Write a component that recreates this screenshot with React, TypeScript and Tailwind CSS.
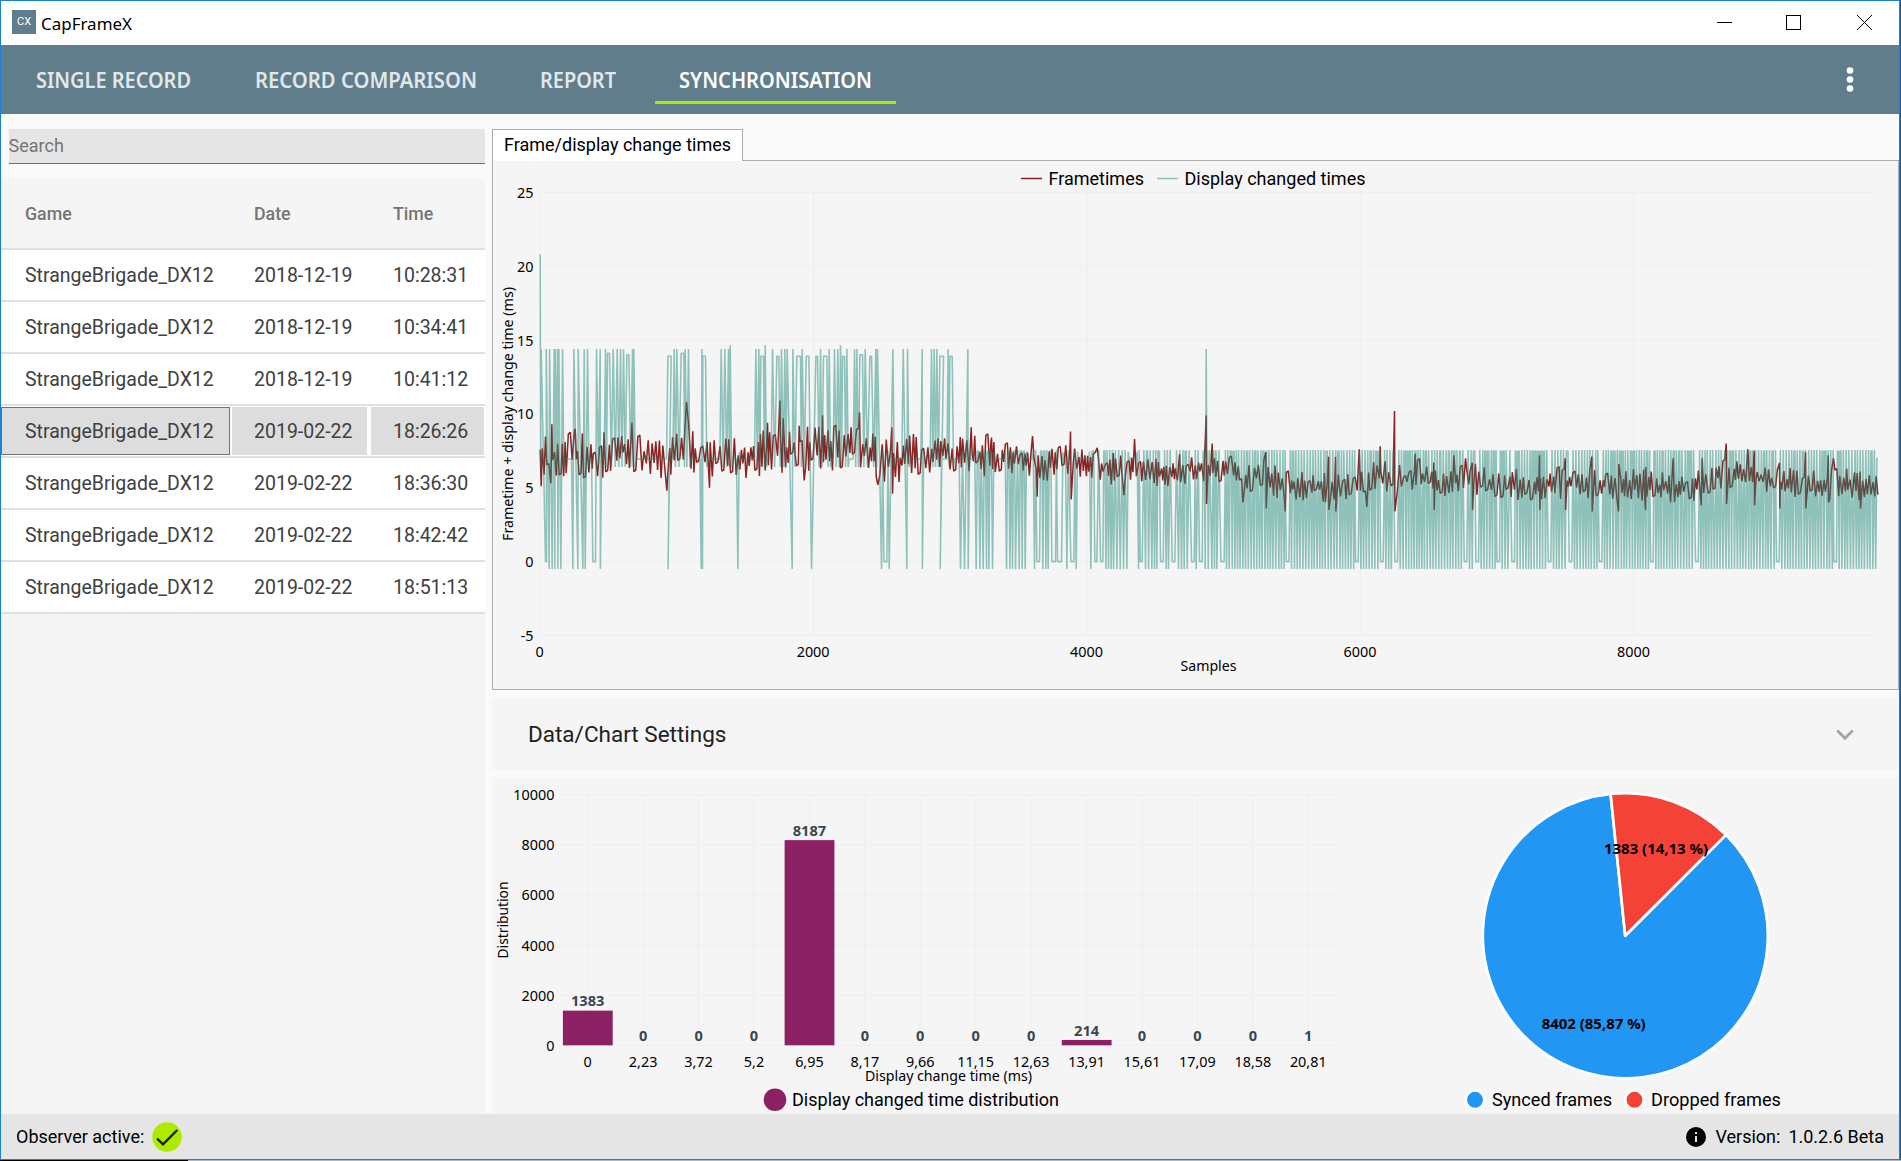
import type { ReactNode } from 'react';
import clsx from 'clsx';

const tabs = [
  { name: 'SINGLE RECORD', length: 155, className: 'ml-[10px] w-[205px]' },
  { name: 'RECORD COMPARISON', length: 222, className: 'ml-[15px] w-[270px]' },
  { name: 'REPORT', length: 76, className: 'ml-[14px] w-[126px]' },
  { name: 'SYNCHRONISATION', length: 193, className: 'ml-[14px] w-[241px]' },
];

const records = [
  { game: 'StrangeBrigade_DX12', date: '2018-12-19', time: '10:28:31' },
  { game: 'StrangeBrigade_DX12', date: '2018-12-19', time: '10:34:41' },
  { game: 'StrangeBrigade_DX12', date: '2018-12-19', time: '10:41:12' },
  { game: 'StrangeBrigade_DX12', date: '2019-02-22', time: '18:26:26' },
  { game: 'StrangeBrigade_DX12', date: '2019-02-22', time: '18:36:30' },
  { game: 'StrangeBrigade_DX12', date: '2019-02-22', time: '18:42:42' },
  { game: 'StrangeBrigade_DX12', date: '2019-02-22', time: '18:51:13' },
];
const selectedRecord = 3;

type Point = [number, number];
// [from, to, value]
type Hold = [number, number, number];

function random(seed: number) {
  let s = seed;
  return () => {
    s = (s * 1664525 + 1013904223) % 4294967296;
    return s / 4294967296;
  };
}

// series are stored on a grid of 4013 columns, three per pixel
const COLUMNS = 4013;
const px = (u: number) => 540.2 + u / 3;
const py = (v: number) => 561.6 - v * 14.77;
const toPath = (points: Point[]) =>
  points.map(([u, v], i) => `${i ? 'L' : 'M'}${px(u).toFixed(2)} ${py(v).toFixed(2)}`).join('');

const peaks = [
  3, 18, 28, 42, 45, 52, 56, 67, 101, 114, 132, 142, 169, 180, 196, 219, 231, 241, 250, 277, 281, 402, 410, 435,
  445, 485, 543, 554, 565, 570, 647, 656, 675, 697, 724, 734, 741, 758, 786, 841, 867, 883, 893, 901, 920, 943,
  950, 975, 1007, 1012, 1058, 1089, 1102, 1146, 1174, 1182, 1190, 1224, 1283, 1998,
];
const peakHolds: Hold[] = [
  [202, 208, 14.1], [260, 266, 14], [383, 393, 13.9], [423, 431, 14.1], [488, 496, 13.9], [662, 670, 13.9],
  [710, 716, 13.9], [770, 781, 13.9], [798, 806, 13.9], [827, 832, 13.9], [850, 860, 13.9], [907, 913, 13.9],
  [959, 967, 14], [989, 994, 13.9], [1199, 1210, 13.9], [1229, 1236, 13.9],
];
const drops = [
  27, 36, 44, 53, 62, 98, 113, 128, 135, 180.5, 383.5, 483, 487, 593, 756, 814, 1024, 1047, 1100, 1146.5, 1200,
  1261, 1273, 1284, 1308, 1319, 1329, 1339, 1346, 1357, 1399, 1409, 1417, 1426, 1437, 1446, 1455, 1483, 1508,
  1517, 1524, 1580, 1608, 1652, 1697, 1705, 1713, 1720, 1730, 1740, 1750, 1760, 1795, 1816, 1825, 1835, 1843,
  1850, 1878, 1885, 1915, 1924, 1932, 1941, 1968, 1995, 2004, 2015, 2023, 2030,
];
const dropHolds: Hold[] = [
  [16, 19, 0], [158, 166, 0], [1031, 1040, 0], [1490, 1498, 0], [1535, 1546, 0], [1552, 1564, 0],
  [1592, 1601, 0], [1664, 1670, 0], [1681, 1688, 0], [1800, 1806, 0], [1861, 1869, 0], [1896, 1904, 0],
  [1954, 1962, 0], [1978, 1986, 0], [2042, 2052, 0],
];
const lateHolds = [2242, 2450, 2525, 2568, 2776, 2811, 2874, 2919, 3028, 3091, 3181, 3335, 3470, 3713, 3885];

function displayChangedTimes(): Point[] {
  const rnd = random(11);
  const events: Hold[] = [
    ...peaks.map((u): Hold => [u, u, 14.4 + (rnd() > 0.88 ? 0.25 : 0)]),
    ...drops.map((u): Hold => [u, u, -0.5]),
    ...peakHolds,
    ...dropHolds,
  ];
  // from here on every other sample drops
  let u = 2059;
  while (u < COLUMNS - 3) {
    const hold = lateHolds.find((h) => Math.abs(h - u) < 8);
    if (hold) {
      events.push([hold - 4, hold + 4, 0]);
      u = hold + 12;
    } else {
      events.push([u, u, -0.5]);
      u += 7.6 + rnd() * 1.6;
    }
  }
  events.sort((a, b) => a[0] - b[0]);

  const points: Point[] = [[0, 20.8]];
  let last = 0;
  let lastValue = 14;
  events.forEach(([from, to, value]) => {
    const gap = from - last;
    const late = last > 1300;
    if (gap > 15) {
      const top = late && rnd() > 0.4;
      points.push([last + 4, top ? 7.45 : lastValue > 7 ? 6.4 : 7.4], [last + 7, 6.95]);
      points.push([from - 7, 6.95], [from - 4, top ? 7.45 : 6.95]);
    } else if (late) {
      const shift = 0.4 + rnd() * 0.2;
      if (rnd() > 0.75) points.push([last + gap * 0.3, 7.48], [last + gap * 0.7, 7.48]);
      else points.push([last + gap * shift, 7.55]);
    } else if (gap > 1 && value > 0 === lastValue > 0) {
      points.push([last + gap / 2, value > 0 ? 6.4 : 7.5]);
    }
    points.push([from, value]);
    if (to > from) points.push([to, value]);
    last = to;
    lastValue = value;
  });
  points.push([COLUMNS - 3, 7], [COLUMNS, 7]);
  return points;
}

const trend: Point[] = [
  [0, 7], [100, 7.3], [160, 6.9], [250, 7.6], [340, 6.9], [390, 7.2], [440, 8], [480, 7], [600, 6.8], [680, 7.4],
  [800, 7.6], [960, 7.6], [1020, 6.9], [1060, 6.6], [1120, 7.1], [1220, 7.4], [1300, 7], [1400, 7], [1510, 6.4],
  [1580, 6.8], [1650, 6.7], [1710, 6.2], [1780, 6.5], [1860, 6], [1990, 6.4], [2070, 6.2], [2120, 5.6], [2160, 6],
  [2220, 5.2], [2290, 5], [2440, 5.1], [2520, 5.9], [2570, 5.4], [2640, 5.8], [2690, 5.2], [2770, 5.7], [2880, 5.1],
  [3100, 5.3], [3300, 5.1], [3440, 4.9], [3530, 5.8], [3640, 5.9], [3700, 5.2], [3850, 5.2], [4013, 5.2],
];
const spikes: Point[] = [
  [3, 5.1], [32, 5.3], [35, 9.3], [105, 9], [275, 9.4], [380, 4.8], [439, 10.8], [508, 5], [682, 9.4], [719, 10.9],
  [729, 9.7], [777, 9.2], [792, 5.5], [847, 9.9], [958, 10.1], [1013, 5.2], [1055, 9.1], [1057, 4.6], [1293, 9.1],
  [1354, 8.4], [1477, 8.5], [1491, 4.4], [1591, 8.8], [1593, 4.2], [1671, 7.7], [1751, 4.5], [1783, 8.3],
  [1998, 9.9], [1999, 3.9], [2016, 8], [2108, 4], [2177, 7.4], [2178, 3.6], [2235, 3.4], [2365, 7.1], [2366, 3.5],
  [2386, 7.1], [2387, 3.4], [2457, 7.6], [2480, 3.7], [2520, 7.8], [2563, 10.2], [2564, 3.4], [2625, 7.3],
  [2681, 6.7], [2682, 3.5], [2741, 7.2], [2776, 7], [2796, 6.7], [2797, 3.5], [2998, 7.2], [2999, 3.5], [3075, 7],
  [3076, 3.5], [3155, 7.1], [3156, 3.4], [3235, 3.4], [3236, 6.6], [3316, 3.5], [3317, 6.4], [3391, 4], [3399, 7],
  [3483, 3.8], [3486, 7], [3558, 8], [3559, 3.9], [3623, 7.6], [3642, 7.5], [3643, 3.8], [3718, 6.7], [3719, 3.6],
  [3796, 7.4], [3797, 3.6], [3864, 7.2], [3865, 4], [3880, 7], [3960, 6.1], [3961, 3.6],
];

function frametimes(): Point[] {
  const rnd = random(29);
  const points: Point[] = [];
  let u = 0;
  let up = true;
  while (u < COLUMNS) {
    const i = Math.max(1, trend.findIndex(([x]) => x >= u));
    const [x0, y0] = trend[i - 1];
    const [x1, y1] = trend[i];
    const mean = y0 + ((y1 - y0) * (u - x0)) / (x1 - x0);
    const amp = u < 1350 ? 1.5 : 1.05;
    const swing = amp * (0.15 + rnd() * 0.95);
    const v = mean + (up ? swing : -swing * 0.9);
    points.push([u, v]);
    // now and then the value stays level for a few samples
    if (rnd() > 0.86) {
      u += 6;
      points.push([Math.min(u, COLUMNS), v + 0.1]);
    }
    up = !up;
    u += 3 + rnd() * 4;
  }
  const kept = points.filter(([x]) => !spikes.some(([s]) => Math.abs(s - x) < 1.8));
  return [...kept, ...spikes].sort((a, b) => a[0] - b[0]);
}

const displayPath = toPath(displayChangedTimes());
const framePath = toPath(frametimes());

const distribution = [
  { label: '0', value: 1383 },
  { label: '2,23', value: 0 },
  { label: '3,72', value: 0 },
  { label: '5,2', value: 0 },
  { label: '6,95', value: 8187 },
  { label: '8,17', value: 0 },
  { label: '9,66', value: 0 },
  { label: '11,15', value: 0 },
  { label: '12,63', value: 0 },
  { label: '13,91', value: 214 },
  { label: '15,61', value: 0 },
  { label: '17,09', value: 0 },
  { label: '18,58', value: 0 },
  { label: '20,81', value: 1 },
];

interface LabelProps {
  x: number;
  y: number;
  length?: number;
  anchor?: 'start' | 'middle' | 'end';
  className?: string;
  rotate?: boolean;
  children: ReactNode;
}

function Label({ x, y, length, anchor = 'middle', className, rotate, children }: LabelProps) {
  return (
    <text
      x={x}
      y={y}
      textAnchor={anchor}
      textLength={length}
      lengthAdjust="spacingAndGlyphs"
      transform={rotate ? `rotate(-90 ${x} ${y})` : undefined}
      className={clsx(className ?? "font-['Noto_Sans',sans-serif] text-[14.4px]")}
    >
      {children}
    </text>
  );
}

const legendText = "font-['Roboto',sans-serif] text-[18px]";

function TitleBar() {
  return (
    <div className="flex h-11 shrink-0 items-center bg-white pl-[11px]">
      <div className="flex h-6 w-6 -translate-y-px items-center justify-center bg-[#607d8b] text-[11px] text-white">CX</div>
      <svg width="100" height="32" className="ml-[5px]">
        <Label x={0} y={22.5} length={91} anchor="start" className="font-['Noto_Sans',sans-serif] text-[17px]">
          CapFrameX
        </Label>
      </svg>
      <svg width="182" height="44" className="ml-auto" fill="none" stroke="#000" shapeRendering="crispEdges">
        <path d="M0 21.5h15M69.5 14.5h14v14h-14z" />
        <path d="M140 14l15 15M155 14l-15 15" shapeRendering="auto" />
      </svg>
    </div>
  );
}

function Navigation() {
  return (
    <div className="flex h-[69px] shrink-0 bg-[#607d8b]">
      {tabs.map((tab) => {
        const active = tab.name === 'SYNCHRONISATION';
        return (
          <div
            key={tab.name}
            className={clsx(
              'mt-[9px] mb-[10px] flex items-center justify-center border-b-[3px]',
              tab.className,
              active ? 'border-[#aeea00]' : 'border-transparent'
            )}
          >
            <svg
              width={tab.length + 24}
              height="46"
              className={clsx('overflow-visible', active ? 'fill-white' : 'fill-[#e1e7ea]')}
            >
              <Label
                x={12}
                y={32.5}
                length={tab.length}
                anchor="start"
                className="font-['Noto_Sans',sans-serif] text-[21px] font-semibold"
              >
                {tab.name}
              </Label>
            </svg>
          </div>
        );
      })}
      <svg width="8" height="69" className="ml-auto mr-[45.5px] fill-white">
        <circle cx="4" cy="25.5" r="3.3" />
        <circle cx="4" cy="34.5" r="3.3" />
        <circle cx="4" cy="43.5" r="3.3" />
      </svg>
    </div>
  );
}

function RecordList() {
  return (
    <div className="flex w-[484px] shrink-0 flex-col pt-[15px]">
      <div className="ml-[7.5px] flex h-[35px] shrink-0 items-center border-b border-[#707070] bg-[#e5e5e5] pb-0.5 text-[18px] text-[#757575]">
        Search
      </div>
      <div className="mt-[15px] flex flex-grow flex-col bg-[#f5f5f5]">
        <div className="flex h-[71px] shrink-0 items-center border-b-2 border-[#e0e0e0] pt-0.5 pl-6 text-[17.8px] font-medium text-[#757575]">
          <span className="w-[229px]">Game</span>
          <span className="w-[139px]">Date</span>
          <span>Time</span>
        </div>
        {records.map((record, i) => {
          const selected = i === selectedRecord;
          return (
            <div
              key={record.time}
              className="flex h-[52px] shrink-0 items-stretch gap-0.5 border-b-2 border-[#e0e0e0] bg-white py-px text-[19.5px] text-[#404040]"
            >
              <span
                className={clsx(
                  'flex w-[229px] items-center border pt-0.5 pl-[23px]',
                  selected ? 'border-[#707070] bg-[#ddd]' : 'border-transparent'
                )}
              >
                {record.game}
              </span>
              <span className={clsx('flex w-[135px] items-center pt-0.5 pl-[22px]', selected && 'bg-[#ddd]')}>
                {record.date}
              </span>
              <span className={clsx('ml-0.5 flex w-[113px] items-center pt-0.5 pl-[22px]', selected && 'bg-[#ddd]')}>
                {record.time}
              </span>
            </div>
          );
        })}
      </div>
    </div>
  );
}

function FrametimeChart() {
  return (
    <svg viewBox="493 161 1405 528" width="1405" height="528" className="block">
      <g stroke="#efefef" strokeWidth="1.25">
        {[25, 20, 15, 10, 5, 0, -5].map((v) => (
          <path key={v} d={`M540 ${py(v)}H1877.7`} />
        ))}
        {[0, 2000, 4000, 6000, 8000].map((v) => (
          <path key={v} d={`M${540.2 + v * 0.13672} 192.3V635.5`} />
        ))}
      </g>
      <path d={framePath} fill="none" stroke="#8b2323" strokeWidth="1.5" strokeLinejoin="bevel" />
      <path d={displayPath} fill="none" stroke="#238b7b" strokeOpacity="0.49" strokeWidth="1.55" strokeLinejoin="bevel" />
      {[25, 20, 15, 10, 5, 0, -5].map((v) => (
        <Label key={v} x={533.5} y={py(v) + 5.5} anchor="end">
          {v}
        </Label>
      ))}
      {[0, 2000, 4000, 6000, 8000].map((v) => (
        <Label key={v} x={539.7 + v * 0.13672} y={657}>
          {v}
        </Label>
      ))}
      <Label x={1208.5} y={671} length={56}>
        Samples
      </Label>
      <Label x={512.5} y={414} length={254} rotate>
        Frametime + display change time (ms)
      </Label>
      <path d="M1021 178.5h21" stroke="#8b2323" strokeWidth="1.5" />
      <Label x={1048.5} y={184.5} length={95.5} anchor="start" className={legendText}>
        Frametimes
      </Label>
      <path d="M1157 178.5h21" stroke="#8dc1b9" strokeWidth="1.5" />
      <Label x={1184.5} y={184.5} length={181} anchor="start" className={legendText}>
        Display changed times
      </Label>
    </svg>
  );
}

function DistributionChart() {
  const y = (v: number) => 1045.3 - v * 0.02506;
  const x = (i: number) => 587.7 + i * 55.43;

  return (
    <svg viewBox="492 777 860 337" width="860" height="337" className="block">
      <g stroke="#efefef" strokeWidth="1.25">
        {[10000, 8000, 6000, 4000, 2000, 0].map((v) => (
          <path key={v} d={`M560 ${y(v)}H1336.7`} />
        ))}
        {distribution.map((d, i) => (
          <path key={d.label} d={`M${x(i)} 794.7V1045.3`} />
        ))}
      </g>
      {[10000, 8000, 6000, 4000, 2000, 0].map((v) => (
        <Label key={v} x={554.5} y={y(v) + 5.5} anchor="end">
          {v}
        </Label>
      ))}
      {distribution.map((d, i) => (
        <g key={d.label}>
          {d.value > 1 && <rect x={x(i) - 24.8} y={y(d.value)} width="49.8" height={d.value * 0.02506} fill="#8b2164" />}
          <Label
            x={x(i)}
            y={y(d.value) - 4.2}
            className="fill-[#37474f] font-['Noto_Sans',sans-serif] text-[14.6px] font-bold"
          >
            {d.value}
          </Label>
          <Label x={x(i)} y={1067}>
            {d.label}
          </Label>
        </g>
      ))}
      <Label x={948.5} y={1081} length={167}>
        Display change time (ms)
      </Label>
      <Label x={508} y={920} length={77} rotate>
        Distribution
      </Label>
      <circle cx="775" cy="1099.7" r="11.3" fill="#8b2164" />
      <Label x={792} y={1106} length={267} anchor="start" className={legendText}>
        Display changed time distribution
      </Label>
    </svg>
  );
}

function SyncPie() {
  return (
    <svg viewBox="1352 777 547 337" width="547" height="337" className="block">
      <g stroke="#fff" strokeWidth="2.7" strokeLinejoin="round">
        <path d="M1625.2 935.7L1726 834.9A142.5 142.5 0 1 1 1610.6 794z" fill="#2196f3" />
        <path d="M1625.2 935.7L1610.6 794A142.5 142.5 0 0 1 1726 834.9z" fill="#f44336" />
        <circle cx="1475" cy="1099.8" r="9.3" fill="#2196f3" />
        <circle cx="1634.5" cy="1099.8" r="9.3" fill="#f44336" />
      </g>
      <Label x={1656} y={854} length={104} className="font-['Noto_Sans',sans-serif] text-[14.4px] font-bold">
        1383 (14,13 %)
      </Label>
      <Label x={1593.7} y={1029} length={104} className="font-['Noto_Sans',sans-serif] text-[14.4px] font-bold">
        8402 (85,87 %)
      </Label>
      <Label x={1492} y={1106} length={120} anchor="start" className={legendText}>
        Synced frames
      </Label>
      <Label x={1651} y={1106} length={130} anchor="start" className={legendText}>
        Dropped frames
      </Label>
    </svg>
  );
}

function StatusBar() {
  return (
    <div className="flex h-[45px] shrink-0 items-center bg-[#e5e5e5] pr-[15px] pl-[15px] text-[18px] text-black">
      <span>Observer active:</span>
      <svg width="30" height="30" className="ml-[7.5px]" viewBox="0 0 30 30">
        <circle cx="15" cy="15" r="14.7" fill="#aeea00" />
        <path d="M5 16.5l6 5.8L25.3 8" fill="none" stroke="#1a2100" strokeWidth="2.4" />
      </svg>
      <svg width="20" height="20" className="ml-auto" viewBox="0 0 20 20">
        <circle cx="10" cy="10" r="10" />
        <path d="M9 5h2v2H9zM9 9h2v6H9z" fill="#e5e5e5" />
      </svg>
      <span className="ml-[9px]">Version:</span>
      <span className="ml-2">1.0.2.6 Beta</span>
    </div>
  );
}

export default function App() {
  return (
    <div className="flex h-[1161px] w-[1901px] flex-col overflow-hidden bg-[#0f5ea8] font-['Roboto',sans-serif]">
      <div className="flex h-[1160px] w-[1900px] flex-col border border-[#1a80d4] bg-[#fafafa]">
        <TitleBar />
        <Navigation />
        <div className="flex min-h-0 flex-grow">
          <RecordList />
          <div className="ml-[7px] flex flex-grow flex-col pt-[15px]">
            {/* selected tab sits on the top border of the panel */}
            <div className="z-10 flex h-8 w-[251px] shrink-0 items-center justify-center border border-b-0 border-[#acacac] bg-white pb-0.5 text-[18px] text-black">
              Frame/display change times
            </div>
            <div className="-mt-px h-[530px] w-[1407px] shrink-0 border border-[#acacac] bg-[#f5f5f5]">
              <FrametimeChart />
            </div>
            <div className="mt-2 flex h-[72px] shrink-0 items-center justify-between bg-[#f5f5f5] pt-0.5 pr-[45px] pl-9 text-[22.5px] text-[#212121]">
              <span>Data/Chart Settings</span>
              <svg width="18" height="12" viewBox="0 0 18 12" fill="none" stroke="#a3a3a3" strokeWidth="2.7">
                <path d="M1.3 1.5L9 9.3l7.7-7.8" />
              </svg>
            </div>
            <div className="mt-[7px] flex flex-grow bg-[#f5f5f5]">
              <DistributionChart />
              <SyncPie />
            </div>
          </div>
        </div>
        <StatusBar />
      </div>
      <div className="flex h-px">
        <div className="w-[188px] bg-black" />
        <div className="flex-grow bg-[#aeb9c4]" />
      </div>
    </div>
  );
}
